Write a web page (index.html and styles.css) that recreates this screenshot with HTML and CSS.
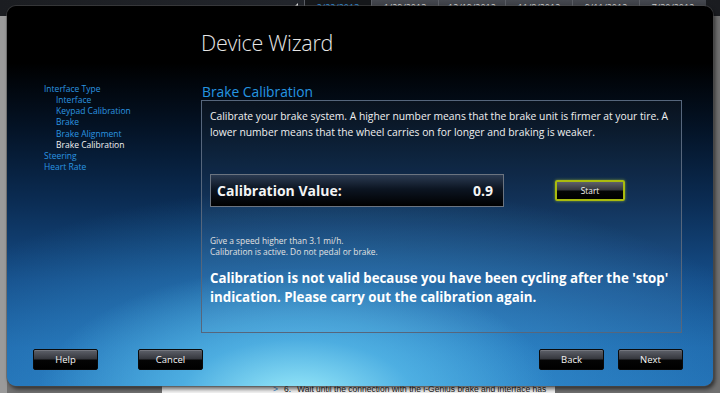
FILE: index.html
```html
<!DOCTYPE html>
<html lang="en">
<head>
  <meta charset="UTF-8" />
  <title>Device Wizard</title>
  <link rel="stylesheet" href="styles.css">
</head>
<body>
  <div class="app">
    <div class="topbar">
      <span class="tab-arrow"></span>
      <div class="tabs">
        <div class="tab tab-active">2/22/2013</div>
        <div class="tab">1/29/2013</div>
        <div class="tab">12/19/2012</div>
        <div class="tab">11/8/2012</div>
        <div class="tab">9/11/2012</div>
        <div class="tab">7/30/2012</div>
      </div>
    </div>
    <div class="workspace">
      <div class="doc">
        <span class="doc-mark">&gt;</span>
        <span class="doc-num">6.</span>
        <span>Wait until the connection with the i-Genius brake and interface has</span>
      </div>
    </div>
  </div>

  <div class="dialog">
    <div class="dialog-title">Device Wizard</div>

    <div class="dialog-body">
      <ul class="nav">
        <li>Interface Type</li>
        <li class="sub">Interface</li>
        <li class="sub">Keypad Calibration</li>
        <li class="sub">Brake</li>
        <li class="sub">Brake Alignment</li>
        <li class="sub current">Brake Calibration</li>
        <li>Steering</li>
        <li>Heart Rate</li>
      </ul>

      <div class="main">
        <div class="section-title">Brake Calibration</div>
        <div class="panel">
          <p class="intro">Calibrate your brake system. A higher number means that the brake unit is firmer at your tire. A lower number means that the wheel carries on for longer and braking is weaker.</p>

          <div class="value-row">
            <div class="value-box">
              <span>Calibration Value:</span>
              <span>0.9</span>
            </div>
            <button class="btn btn-start">Start</button>
          </div>

          <p class="hint">Give a speed higher than 3.1 mi/h.<br>Calibration is active. Do not pedal or brake.</p>

          <p class="warning">Calibration is not valid because you have been cycling after the 'stop' indication. Please carry out the calibration again.</p>
        </div>
      </div>
    </div>

    <div class="dialog-footer">
      <button class="btn">Help</button>
      <button class="btn btn-cancel">Cancel</button>
      <button class="btn btn-back">Back</button>
      <button class="btn">Next</button>
    </div>
  </div>
</body>
</html>
```

FILE: styles.css
```css
body {
  margin: 0;
  width: 720px;
  height: 393px;
  overflow: hidden;
  position: relative;
  font-family: "Open Sans", "Noto Sans", sans-serif;
  background: #757575;
}

.app {
  display: flex;
  flex-direction: column;
  height: 393px;
}

.topbar {
  height: 16px;
  display: flex;
  align-items: flex-start;
  background: linear-gradient(90deg, #1b1d21, #22252b 40%, #1a1c20);
}

.tab-arrow {
  margin: 3px 0 0 292px;
  width: 0;
  height: 0;
  border-left: 6px solid transparent;
  border-bottom: 6px solid #d8d8d8;
}

.tabs {
  display: flex;
  margin-left: 6px;
}

.tab {
  width: 67px;
  height: 16px;
  border-left: 1px solid #5a5d64;
  background: linear-gradient(#45484f, #2b2d32);
  color: #d0d0d0;
  font-size: 9px;
  line-height: 14px;
  text-align: center;
  padding-top: 1px;
  box-sizing: border-box;
}

.tab-active {
  background: #15171a;
  color: #2f8ad6;
}

.workspace {
  flex: 1;
  display: flex;
  background: linear-gradient(90deg, #9a9a9a 0, #9a9a9a 7px, #707070 7px);
}

.doc {
  margin-left: 162px;
  width: 393px;
  background: #f4f4f4;
  display: flex;
  align-items: flex-end;
  gap: 6px;
  padding-left: 111px;
  box-sizing: border-box;
  font-family: "Liberation Sans", sans-serif;
  font-size: 8.5px;
  line-height: 8px;
  color: #222;
  white-space: nowrap;
  overflow: hidden;
}

.doc-mark {
  color: #3a8ad0;
}

/* the wizard window floating over the app */
.dialog {
  position: absolute;
  left: 7px;
  top: 6px;
  width: 706px;
  height: 380px;
  border-radius: 9px;
  overflow: hidden;
  display: flex;
  flex-direction: column;
  box-shadow: 0 0 0 1px rgba(80, 80, 80, 0.5), 2px 3px 4px rgba(0, 0, 0, 0.6);
  background:
    radial-gradient(ellipse 260px 130px at 290px 392px, rgba(160, 240, 252, 0.95) 0%, rgba(90, 190, 235, 0.7) 45%, rgba(60, 150, 215, 0) 100%),
    radial-gradient(ellipse 480px 220px at 330px 400px, rgba(60, 160, 225, 0.8) 0%, rgba(40, 120, 195, 0) 100%),
    linear-gradient(#000 0%, #000 15%, #041428 33%, #0b2d55 52%, #154d88 72%, #1d65a8 90%, #1f6aae 100%);
}

.dialog-title {
  margin: 24px 0 0 194px;
  font-size: 21.5px;
  font-weight: 300;
  line-height: 26px;
  color: #e6e6e6;
  letter-spacing: -0.3px;
}

.dialog-body {
  display: flex;
  margin-top: 27px;
}

.nav {
  list-style: none;
  margin: 0;
  padding: 0 0 0 37px;
  width: 157px;
  font-size: 8.5px;
  line-height: 11.15px;
  color: #2b95e0;
}

.nav .sub {
  padding-left: 12px;
}

.nav .current {
  color: #f2f2f2;
}

.main {
  width: 481px;
}

.section-title {
  font-size: 13.8px;
  line-height: 17px;
  color: #2596e2;
  padding-left: 1px;
}

.panel {
  height: 233px;
  box-sizing: border-box;
  border: 1px solid #56667c;
  background: rgba(255, 255, 255, 0.03);
  padding: 7px 8px 0 8px;
}

.intro {
  margin: 0;
  font-size: 10.3px;
  line-height: 16px;
  color: #f0f0f0;
}

.value-row {
  display: flex;
  align-items: center;
  margin-top: 34px;
}

.value-box {
  width: 294px;
  height: 33px;
  box-sizing: border-box;
  border: 1px solid #6b7480;
  background: linear-gradient(#2b3b52 0%, #0c1522 45%, #000 100%);
  display: flex;
  justify-content: space-between;
  align-items: center;
  padding: 0 10px 0 6px;
  font-size: 14px;
  font-weight: 700;
  color: #f4f4f4;
}

.btn {
  width: 65px;
  height: 21px;
  border: 1px solid #0a0a0a;
  border-radius: 2px;
  background: linear-gradient(#5e616a 0%, #34363c 48%, #050505 52%, #000 100%);
  box-shadow: inset 0 1px 0 rgba(255, 255, 255, 0.15);
  color: #f4f4f4;
  font-family: "Open Sans", "Noto Sans", sans-serif;
  font-size: 9.5px;
  padding: 0;
  cursor: pointer;
}

.btn-start {
  margin-left: 51px;
  width: 70px;
  border: 2px solid #a9bb0e;
  box-shadow: 0 0 3px rgba(200, 230, 40, 0.6);
  font-size: 8.3px;
}

.hint {
  margin: 28px 0 0 0;
  font-size: 8.4px;
  line-height: 11px;
  color: #e2e2e2;
}

.warning {
  margin: 12px 0 0 0;
  font-size: 13.3px;
  font-weight: 700;
  line-height: 19px;
  color: #fff;
}

.dialog-footer {
  display: flex;
  margin-top: auto;
  margin-bottom: 16px;
  padding: 0 30px 0 26px;
}

.btn-cancel {
  margin-left: 40px;
}

.btn-back {
  margin-left: auto;
  margin-right: 14px;
}
```
